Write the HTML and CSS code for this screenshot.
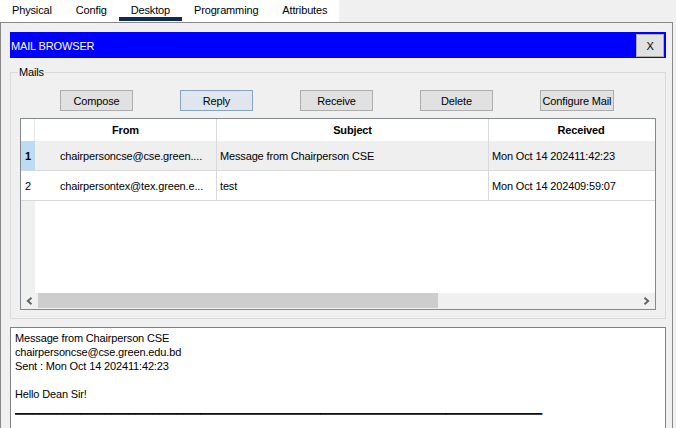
FILE: index.html
```html
<!DOCTYPE html>
<html>
<head>
<meta charset="utf-8">
<link rel="stylesheet" href="styles.css">
</head>
<body>
<div class="tabs">
  <div class="tab">Physical</div>
  <div class="tab">Config</div>
  <div class="tab active">Desktop</div>
  <div class="tab">Programming</div>
  <div class="tab">Attributes</div>
</div>
<div class="panel">
  <div class="titlebar">
    <span class="title">MAIL BROWSER</span>
    <button class="close">X</button>
  </div>
  <fieldset class="mails">
    <legend>Mails</legend>
    <div class="actions">
      <button>Compose</button>
      <button class="focused">Reply</button>
      <button>Receive</button>
      <button>Delete</button>
      <button class="wide">Configure Mail</button>
    </div>
    <div class="table">
      <div class="row thead">
        <div class="c num"></div>
        <div class="c from">From</div>
        <div class="c subj">Subject</div>
        <div class="c recv">Received</div>
      </div>
      <div class="row sel">
        <div class="c num">1</div>
        <div class="c from">chairpersoncse@cse.green....</div>
        <div class="c subj">Message from Chairperson CSE</div>
        <div class="c recv">Mon Oct 14 202411:42:23</div>
      </div>
      <div class="row">
        <div class="c num">2</div>
        <div class="c from">chairpersontex@tex.green.e...</div>
        <div class="c subj">test</div>
        <div class="c recv">Mon Oct 14 202409:59:07</div>
      </div>
      <div class="filler"><div class="gutter"></div></div>
      <div class="hscroll">
        <span class="arrow"><svg width="7" height="8" viewBox="0 0 7 8"><polyline points="5.5,0.8 1.8,4 5.5,7.2" fill="none" stroke="#606060" stroke-width="1.8"/></svg></span>
        <div class="thumb"></div>
        <div class="track"></div>
        <span class="arrow"><svg width="7" height="8" viewBox="0 0 7 8"><polyline points="1.5,0.8 5.2,4 1.5,7.2" fill="none" stroke="#606060" stroke-width="1.8"/></svg></span>
      </div>
    </div>
  </fieldset>
  <div class="message">
    <div>Message from Chairperson CSE</div>
    <div>chairpersoncse@cse.green.edu.bd</div>
    <div>Sent : Mon Oct 14 202411:42:23</div>
    <div>&nbsp;</div>
    <div>Hello Dean Sir!</div>
    <div class="rule">________________________________________________________________________________________</div>
  </div>
</div>
</body>
</html>
```
FILE: styles.css
```css
* { box-sizing: border-box; }
html, body { margin: 0; height: 100%; overflow: hidden; }
body {
  width: 676px;
  background: #f0f0f0;
  font-family: "Liberation Sans", Arial, sans-serif;
  font-size: 11px;
  letter-spacing: -0.15px;
  color: #000;
}
.tabs { display: flex; width: 339px; height: 22px; background: #fff; }
.tab {
  padding: 0 12px;
  height: 21px;
  line-height: 20px;
  border-bottom: 4px solid transparent;
  white-space: nowrap;
}
.tab.active { border-bottom-color: #0f2b4f; }

.panel {
  width: 673px;
  height: 420px;
  border: 1px solid #888;
  border-bottom: none;
  padding: 9px 6px 0 9px;
}
.titlebar {
  display: flex;
  justify-content: space-between;
  align-items: flex-start;
  height: 26px;
  background: #0000ff;
  color: #fff;
}
.title { padding: 2px 0 0 1px; line-height: 24px; }
.close {
  margin: 2px 2px 0 0;
  width: 28px;
  height: 23px;
  padding: 0;
  background: #e1e1e1;
  border: 1px solid #adadad;
  font: inherit;
  letter-spacing: inherit;
  color: #000;
}

.mails {
  margin: 8px 0 0;
  padding: 11px 9px 8px;
  border: 1px solid #dadada;
  min-width: 0;
}
.mails legend { padding: 0 1px; margin-left: -2px; line-height: 13px; }

.actions { display: flex; gap: 47px; padding-left: 40px; }
.actions button {
  width: 73px;
  height: 21px;
  padding: 0;
  background: #e1e1e1;
  border: 1px solid #adadad;
  font: inherit;
  letter-spacing: inherit;
  color: #000;
  white-space: nowrap;
}
.actions button.focused { background: #dfe6ee; border-color: #86a3c1; }
.actions button.wide { width: 74px; }

.table {
  margin-top: 7px;
  height: 192px;
  border: 1px solid #828790;
  background: #fff;
  display: flex;
  flex-direction: column;
  overflow: hidden;
}
.row {
  display: grid;
  grid-template-columns: 14px 182px 272px 184px;
  height: 30px;
  flex: none;
  border-bottom: 1px solid #d9d9d9;
}
.c {
  display: flex;
  align-items: center;
  white-space: nowrap;
  overflow: hidden;
}
.num { padding-left: 4px; }
.from { padding-left: 25px; border-right: 1px solid #d9d9d9; }
.subj { padding-left: 3px; border-right: 1px solid #d9d9d9; }
.recv { padding-left: 3px; }
.thead { height: 22px; border-bottom: none; font-weight: bold; }
.thead .c { justify-content: center; padding-left: 0; }
.thead .num { border-right: 1px solid #e6e6e6; }
.sel { background: #efefef; }
.sel .num { background: #bcdcf4; font-weight: bold; }

.filler { flex: 1; display: flex; }
.gutter { width: 14px; background: #f0f0f0; }

.hscroll { height: 16px; flex: none; display: flex; background: #f0f0f0; }
.arrow { width: 17px; display: flex; align-items: center; justify-content: center; }
.thumb { width: 400px; height: 15px; background: #cdcdcd; }
.track { flex: 1; }

.message {
  margin-top: 8px;
  height: 120px;
  border: 1px solid #828282;
  background: #fff;
  padding: 3px 4px;
  line-height: 14px;
}
.rule {
  white-space: nowrap;
  overflow: hidden;
  letter-spacing: -0.13px;
  text-shadow: 0 0.8px 0 #000, 0 -0.3px 0 #000;
}
```
